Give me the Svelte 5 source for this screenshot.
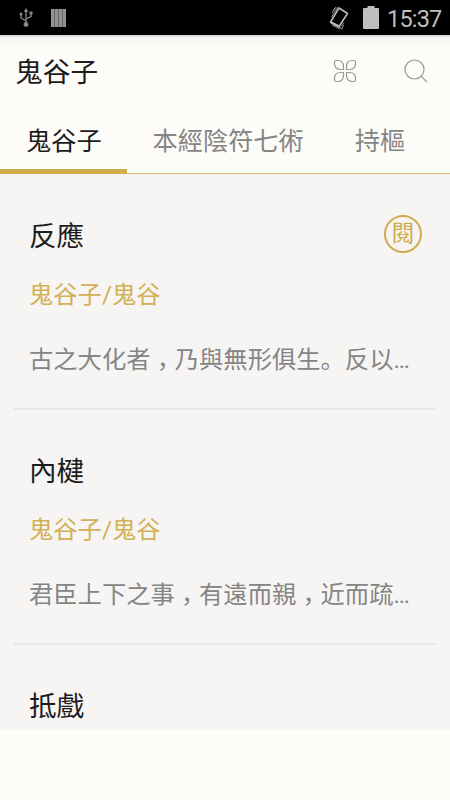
<script lang="ts">
	interface Chapter {
		title: string;
		source?: string;
		excerpt?: string;
		readable?: boolean;
	}

	const tabs = ['鬼谷子', '本經陰符七術', '持樞'];

	const chapters: Chapter[] = [
		{ title: '反應', source: '鬼谷子/鬼谷', excerpt: '古之大化者，乃與無形俱生。反以…', readable: true },
		{ title: '內楗', source: '鬼谷子/鬼谷', excerpt: '君臣上下之事，有遠而親，近而疏…' },
		{ title: '抵戲' }
	];

	let activeTab = $state(0);
</script>

<div class="screen">
	<div class="status-bar">
		<svg class="usb" width="14" height="20" viewBox="0 0 14 20">
			<path d="M7 3v13M7 13L2 10V6M7 11l5-2.5V5" fill="none" stroke="#8a8a8a" stroke-width="1.3" />
			<path d="M7 0l2.2 4H4.800z" fill="#8a8a8a" />
			<circle cx="7" cy="16.500" r="2.400" fill="#8a8a8a" />
			<circle cx="2" cy="6" r="1.500" fill="#8a8a8a" />
			<path d="M10.500 3.500h3v3h-3z" fill="#8a8a8a" />
		</svg>
		<svg class="bars" width="15" height="18" viewBox="0 0 15 18">
			<path d="M0 0h15v18H0z" fill="#666" />
			<path d="M1.500 0v18M5.500 0v18M9.500 0v18M13.500 0v18" stroke="#929292" stroke-width="3" />
		</svg>
		<div class="status-right">
			<svg class="rotate" width="20" height="24" viewBox="0 0 20 24">
				<path d="M10 2L18.500 7.500L10 20.500L1.500 16z" fill="none" stroke="#bebebe" stroke-width="1.500" stroke-linejoin="round" />
				<path d="M1.500 15l9 4.500-1 2-8.500-4.500z" fill="#bebebe" />
				<path d="M2.500 11L9 1M3 7l4-6M4 5l2-3M3 19l8 4M9 21l5 2M12 20.500l3-4M13 22l2-3" fill="none" stroke="#999" />
			</svg>
			<svg class="battery" width="16" height="23" viewBox="0 0 16 23">
				<path d="M4.500 0h7v2H15q1 0 1 1v19q0 1-1 1H1q-1 0-1-1V3q0-1 1-1h3.500z" fill="#bebebe" />
			</svg>
			<span class="clock">15:37</span>
		</div>
	</div>

	<header>
		<h1>鬼谷子</h1>
		<button aria-label="分類">
			<svg width="24" height="24" viewBox="0 0 24 24">
				<g fill="none" stroke="#999" stroke-width="1.200">
					<path d="M10.500 10.500V7.500Q10.500 1.500 4.500 1.500H3Q1.500 1.500 1.500 3V4.500Q1.500 10.500 7.500 10.500z" />
					<path d="M13.500 10.500V7.500Q13.500 1.500 19.500 1.500H21Q22.500 1.500 22.500 3V4.500Q22.500 10.500 16.500 10.500z" />
					<path d="M10.500 13.500V16.500Q10.500 22.500 4.500 22.500H3Q1.500 22.500 1.500 21V19.500Q1.500 13.500 7.500 13.500z" />
					<path d="M13.500 13.500V16.500Q13.500 22.500 19.500 22.500H21Q22.500 22.500 22.500 21V19.500Q22.500 13.500 16.500 13.500z" />
				</g>
			</svg>
		</button>
		<button aria-label="搜尋">
			<svg width="24" height="24" viewBox="0 0 24 24">
				<g fill="none" stroke="#999" stroke-width="1.200">
					<circle cx="10.500" cy="10.500" r="9.500" />
					<path d="M17.300 17.300l5.700 5.700" />
				</g>
			</svg>
		</button>
	</header>

	<nav>
		{#each tabs as tab, i}
			<button class="tab" class:active={activeTab === i} onclick={() => (activeTab = i)}>{tab}</button>
		{/each}
	</nav>

	<main>
		{#each chapters as chapter}
			<article>
				<div class="title-row">
					<h2>{chapter.title}</h2>
					{#if chapter.readable}
						<span class="badge">閱</span>
					{/if}
				</div>
				{#if chapter.source}
					<p class="source">{chapter.source}</p>
				{/if}
				{#if chapter.excerpt}
					<p class="excerpt">
						{#each chapter.excerpt.split('，') as part, i}{#if i > 0}<span class="comma">，</span>{/if}{part}{/each}
					</p>
				{/if}
			</article>
		{/each}
	</main>
</div>

<style>
	:global(body) {
		margin: 0;
	}

	.screen {
		display: flex;
		flex-direction: column;
		width: 450px;
		height: 800px;
		overflow: hidden;
		background: #fdfcf8;
		color: #1c1c1c;
		font-family: Roboto, 'Noto Sans CJK SC', sans-serif;
	}

	button {
		padding: 0;
		border: none;
		background: none;
		font: inherit;
		color: inherit;
	}

	svg {
		display: block;
	}

	h1,
	h2,
	p {
		margin: 0;
		font-weight: inherit;
	}

	/* Status bar */
	.status-bar {
		display: flex;
		flex: none;
		align-items: center;
		box-sizing: border-box;
		height: 35px;
		padding: 0 8px 0 19px;
		background: #000;
	}

	.bars {
		margin-left: 18px;
	}

	.status-right {
		display: flex;
		align-items: center;
		margin-left: auto;
	}

	.battery {
		margin: 0 8px 0 14px;
	}

	.clock {
		width: 55px;
		padding-top: 3px;
		font-size: 23.5px;
		line-height: 32px;
		letter-spacing: -0.8px;
		color: #bebebe;
	}

	/* Header */
	header {
		display: flex;
		flex: none;
		align-items: center;
		gap: 47px;
		height: 72px;
		padding: 0 22px 0 15px;
		background: linear-gradient(#d0cfcc, #f5f4f0 3px, #fdfcf8 11px);
	}

	h1 {
		flex: 1;
		padding-top: 3px;
		font-size: 27.7px;
		line-height: 69px;
	}

	/* Tabs */
	nav {
		display: flex;
		flex: none;
		box-sizing: border-box;
		height: 67px;
		border-bottom: 1px solid #dcb96a;
	}

	.tab {
		height: 67px;
		padding: 3px 25px 0 26px;
		box-sizing: border-box;
		font-size: 25.2px;
		line-height: 64px;
		white-space: nowrap;
		color: #858585;
	}

	.tab.active {
		color: #1c1c1c;
		box-shadow: inset 0 -5px #cfac4c;
	}

	/* Chapter list */
	main {
		flex: none;
		box-sizing: border-box;
		height: 555px;
		padding-top: 1px;
		overflow: hidden;
		background: #f7f5f4;
	}

	article {
		box-sizing: border-box;
		height: 235px;
		margin: 0 14px;
		padding: 40px 14px 0 15px;
		border-bottom: 2px solid #e9e7e6;
	}

	.title-row {
		display: flex;
		align-items: flex-start;
		justify-content: space-between;
		height: 40px;
	}

	h2 {
		padding-top: 2px;
		font-size: 27.6px;
		line-height: 40px;
	}

	.badge {
		box-sizing: border-box;
		width: 38px;
		height: 38px;
		border: 2px solid #cfac4c;
		border-radius: 50%;
		font-size: 23px;
		line-height: 33px;
		text-align: center;
		color: #cfac4c;
	}

	.source {
		margin-top: 22px;
		font-size: 24.3px;
		line-height: 36px;
		color: #d2b054;
	}

	.excerpt {
		margin-top: 29px;
		font-size: 24.3px;
		line-height: 36px;
		white-space: nowrap;
		color: #858585;
	}

	/* comma centred in its cell, dropped to the baseline */
	.comma {
		font-family: 'Noto Sans CJK TC', sans-serif;
		line-height: 0;
		vertical-align: -0.3em;
	}
</style>
